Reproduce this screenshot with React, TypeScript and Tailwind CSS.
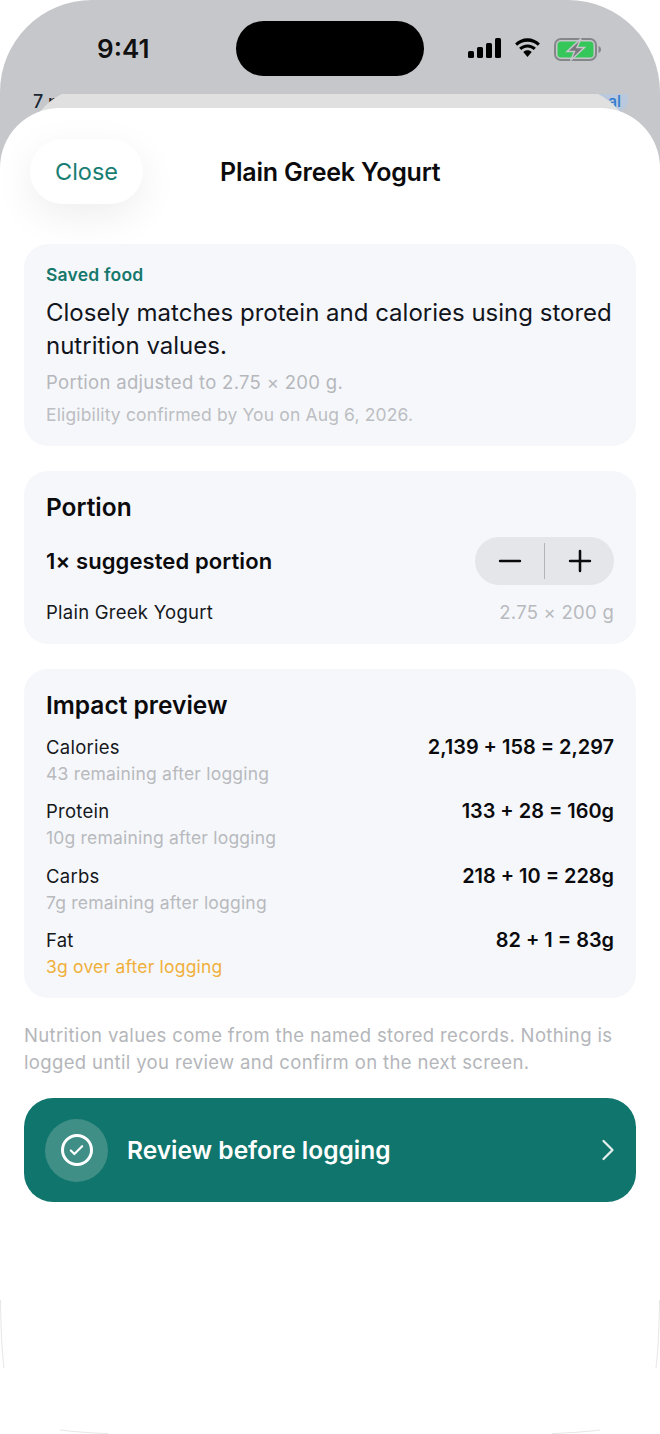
import { Check, ChevronRight, Minus, Plus } from 'lucide-react'

const impactRows = [
  { label: 'Calories', sum: '2,139 + 158 = 2,297', note: '43 remaining after logging', over: false },
  { label: 'Protein', sum: '133 + 28 = 160g', note: '10g remaining after logging', over: false },
  { label: 'Carbs', sum: '218 + 10 = 228g', note: '7g remaining after logging', over: false },
  { label: 'Fat', sum: '82 + 1 = 83g', note: '3g over after logging', over: true },
]

function SignalIcon() {
  return (
    <svg width="33" height="20" viewBox="0 0 33 20" fill="#000">
      <rect x="0" y="13" width="6" height="7" rx="1.5" />
      <rect x="9" y="9" width="6" height="11" rx="1.5" />
      <rect x="18" y="5" width="6" height="15" rx="1.5" />
      <rect x="27" y="0" width="6" height="20" rx="1.5" />
    </svg>
  )
}

function WifiIcon() {
  return (
    <svg width="29" height="20" viewBox="0 0 29 20" fill="#000">
      <path d="M14.5 3.7c4 0 7.600 1.500 10.300 4.100l2.100-2.200C23.600 2.300 19.300.3 14.500.3S5.400 2.300 2.100 5.600l2.100 2.200c2.700-2.600 6.300-4.100 10.300-4.100z" />
      <path d="M14.500 9.500c2.400 0 4.600.9 6.200 2.500l2.200-2.200c-2.200-2.100-5.100-3.400-8.400-3.400s-6.200 1.300-8.400 3.400l2.200 2.200c1.600-1.600 3.800-2.500 6.200-2.500z" />
      <path d="M14.500 12.300c-1.700 0-3.100.6-4.200 1.600l4.200 5.100 4.200-5.100c-1.100-1-2.500-1.600-4.200-1.600z" />
    </svg>
  )
}

function BatteryIcon() {
  return (
    <svg width="47" height="23" viewBox="0 0 47 23">
      <rect x="1" y="1" width="41" height="21" rx="6" fill="none" stroke="#85868a" strokeWidth="2" />
      <rect x="3.500" y="3.500" width="36" height="16" rx="3.500" fill="#35c759" />
      <path d="M44.500 8v7c1.500-.4 2.500-1.900 2.500-3.500S46 8.400 44.500 8z" fill="#85868a" />
      <path d="M27 0.500 13 13.500h7.500L16.500 22.500 30.500 9.500H23z" fill="#77797c" stroke="#c6c7cb" strokeWidth="1.500" />
    </svg>
  )
}

export default function App() {
  return (
    <div className="relative h-[1434px] w-[660px] overflow-hidden bg-white font-['Inter',sans-serif] text-[#0b0c10]">
      {/* phone backdrop behind the sheet */}
      <div className="absolute inset-x-0 top-0 h-[200px] rounded-t-[92px] bg-gradient-to-b from-[#c6c7cb] from-80% to-white">
        <div className="absolute inset-x-0 top-[94px] h-[30px] overflow-hidden">
          <span className="absolute left-[33px] -top-[6px] text-[18px] font-medium text-[#1c2733]">7 pr</span>
          <div className="absolute left-[585px] -top-[8px] h-[26px] w-[43px] rounded-[12px] bg-[#b9c8dc]" />
          <span className="absolute right-[39px] -top-[5px] text-[16px] font-medium text-[#2f7bd0]">kcal</span>
        </div>
      </div>

      {/* status bar */}
      <div className="relative flex h-[94px] items-start">
        <span className="ml-[97px] mt-[33px] text-[26px] font-semibold leading-[32px] text-[#111]">9:41</span>
        <div className="ml-[87px] mt-[21px] h-[55px] w-[188px] rounded-full bg-black" />
        <div className="ml-[44px] mt-[38px] flex items-start gap-[12px]">
          <SignalIcon />
          <WifiIcon />
          <BatteryIcon />
        </div>
      </div>

      {/* stacked sheet edge, its top is clipped under the status bar */}
      <div className="relative h-[40px] overflow-hidden">
        <div className="mx-[28px] -mt-[6px] h-[60px] rounded-t-[60px] bg-[#e0e0e0]" />
      </div>

      {/* sheet */}
      <div className="relative -mt-[26px] h-[1326px] rounded-t-[60px] bg-white">
        <div className="flex h-[136px] items-start">
          <button className="ml-[30px] mt-[31px] flex h-[65px] w-[113px] items-center justify-center rounded-[33px] bg-white text-[23.500px] text-[#197e72] shadow-[0_12px_40px_rgba(0,0,0,0.07)]">
            Close
          </button>
          <h1 className="ml-[77px] mt-[47px] text-[25px] font-semibold leading-[34px] tracking-[-0.2px] text-[#0b0b0d]">
            Plain Greek Yogurt
          </h1>
        </div>

        <div className="flex flex-col px-[24px]">
          {/* saved food */}
          <section className="flex h-[202px] flex-col rounded-[24px] bg-[#f6f7fb] px-[22px] pt-[20px]">
            <div className="text-[17.500px] font-semibold leading-[22px] tracking-[0.2px] text-[#15786c]">Saved food</div>
            <p className="mt-[10px] text-[24px] leading-[33px] text-[#12151c]">
              Closely matches protein and calories using stored nutrition values.
            </p>
            <p className="mt-[8px] text-[18.500px] leading-[24px] tracking-[0.3px] text-[#b5b7bb]">Portion adjusted to 2.75 × 200 g.</p>
            <p className="mt-[9px] text-[17.500px] leading-[24px] tracking-[0.14px] text-[#bcbec2]">
              Eligibility confirmed by You on Aug 6, 2026.
            </p>
          </section>

          {/* portion */}
          <section className="mt-[25px] h-[173px] rounded-[24px] bg-[#f6f7fb] px-[22px] pt-[20px]">
            <h2 className="text-[24.500px] font-semibold leading-[32px] text-[#0b0b0d]">Portion</h2>
            <div className="mt-[14px] flex h-[48px] items-center justify-between">
              <span className="text-[22px] font-semibold tracking-[0.1px] text-[#0b0b0d]">1× suggested portion</span>
              <div className="flex h-[48px] w-[139px] items-center rounded-full bg-[#e5e6ea]">
                <div className="flex flex-1 justify-center">
                  <Minus size={34} strokeWidth={1.8} color="#0b0b0d" />
                </div>
                <div className="h-[36px] w-px bg-[#b3b4b8]" />
                <div className="flex flex-1 justify-center">
                  <Plus size={34} strokeWidth={1.8} color="#0b0b0d" />
                </div>
              </div>
            </div>
            <div className="mt-[14px] flex items-center justify-between leading-[26px]">
              <span className="text-[18.500px] tracking-[0.25px] text-[#15171b]">Plain Greek Yogurt</span>
              <span className="text-[18.500px] tracking-[0.25px] text-[#b8babe]">2.75 × 200 g</span>
            </div>
          </section>

          {/* impact */}
          <section className="mt-[25px] h-[329px] rounded-[24px] bg-[#f6f7fb] px-[22px] pt-[20px]">
            <h2 className="text-[24.500px] font-semibold leading-[32px] text-[#0b0b0d]">Impact preview</h2>
            <div className="mt-[12px] flex flex-col gap-[10.300px]">
              {impactRows.map((row) => (
                <div key={row.label} className="h-[54px]">
                  <div className="flex items-center justify-between leading-[28px]">
                    <span className="text-[18.500px] tracking-[0.25px] text-[#15171b]">{row.label}</span>
                    <span className="text-[19.900px] font-semibold text-[#0b0b0d]">{row.sum}</span>
                  </div>
                  <div className={row.over ? 'text-[17.500px] leading-[26px] tracking-[0.2px] text-[#f0b03c]' : 'text-[17.500px] leading-[26px] tracking-[0.2px] text-[#b8babe]'}>
                    {row.note}
                  </div>
                </div>
              ))}
            </div>
          </section>

          <p className="mt-[24px] text-[18.500px] leading-[27px] tracking-[0.35px] text-[#b4b6ba]">
            Nutrition values come from the named stored records. Nothing is logged until you review and confirm on the next screen.
          </p>

          <button className="mt-[22px] flex h-[104px] items-center rounded-[29px] bg-[#10756c] pl-[21px] pr-[10px] text-white">
            <span className="flex h-[63px] w-[63px] items-center justify-center rounded-full bg-[#3f8f87]">
              <span className="flex h-[32px] w-[32px] items-center justify-center rounded-full border-[3.500px] border-white">
                <Check size={17} strokeWidth={3} />
              </span>
            </span>
            <span className="ml-[19px] text-[24.500px] font-semibold">Review before logging</span>
            <ChevronRight size={36} strokeWidth={1.5} className="ml-auto text-[#e4efed]" />
          </button>
        </div>
      </div>

      {/* faint device edge at the bottom corners */}
      <svg className="pointer-events-none absolute inset-0" width="660" height="1434" fill="none" stroke="#e6e6e6">
        <path d="M0.500 1300 C1 1335 2 1350 4 1368" />
        <path d="M659.500 1300 C659 1335 658 1350 656 1368" />
        <path d="M60 1430 C76 1432 92 1433 108 1433.500" />
        <path d="M600 1430 C584 1432 568 1433 552 1433.500" />
      </svg>
    </div>
  )
}
